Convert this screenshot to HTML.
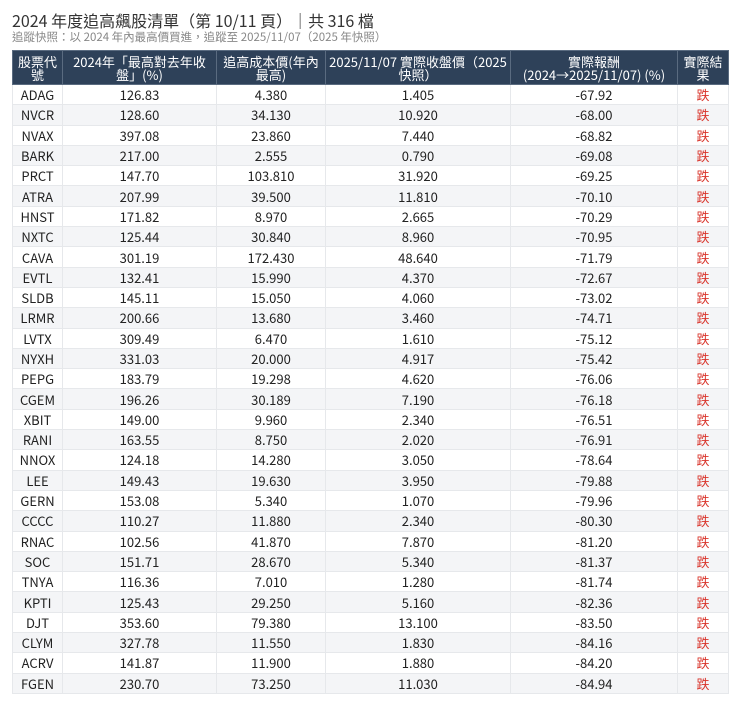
<!DOCTYPE html>
<html><head><meta charset="utf-8"><style>
body{margin:0;background:#fff;font-family:"Liberation Sans","Noto Sans CJK TC",sans-serif;color:#222}
.t{position:absolute;left:12px;top:8px;font-size:16px;color:#333;font-family:"Noto Sans CJK TC",sans-serif;white-space:nowrap}
.s{position:absolute;left:12px;top:29px;font-size:11.5px;color:#888;font-family:"Noto Sans CJK TC",sans-serif;white-space:nowrap}
table{position:absolute;left:12px;top:50px;width:716px;border-collapse:collapse;table-layout:fixed;font-family:"Noto Sans CJK TC",sans-serif;font-size:13px}
th{background:#2e4159;color:#fff;font-weight:normal;font-size:13px;line-height:13px;height:33px;padding:0 3px;border:1px solid #5a6b80;text-align:center}
td{height:19.3px;padding:0;text-align:center;border:1px solid #e6e8eb;line-height:19px}
tr:nth-child(even) td{background:#f4f5f7}
td.r{color:#d9342b}
</style></head><body>
<div class="t">2024 年度追高飆股清單（第 10/11 頁）｜共 316 檔</div>
<div class="s">追蹤快照：以 2024 年內最高價買進，追蹤至 2025/11/07（2025 年快照）</div>
<table>
<colgroup><col style="width:50px"><col style="width:154px"><col style="width:109px"><col style="width:185px"><col style="width:167px"><col style="width:51px"></colgroup>
<thead><tr><th>股票代號</th><th>2024年「最高對去年收盤」(%)</th><th>追高成本價(年內最高)</th><th>2025/11/07 實際收盤價（2025快照）</th><th>實際報酬<br>(2024→2025/11/07) (%)</th><th>實際結果</th></tr></thead>
<tbody>
<tr><td>ADAG</td><td>126.83</td><td>4.380</td><td>1.405</td><td>-67.92</td><td class="r">跌</td></tr>
<tr><td>NVCR</td><td>128.60</td><td>34.130</td><td>10.920</td><td>-68.00</td><td class="r">跌</td></tr>
<tr><td>NVAX</td><td>397.08</td><td>23.860</td><td>7.440</td><td>-68.82</td><td class="r">跌</td></tr>
<tr><td>BARK</td><td>217.00</td><td>2.555</td><td>0.790</td><td>-69.08</td><td class="r">跌</td></tr>
<tr><td>PRCT</td><td>147.70</td><td>103.810</td><td>31.920</td><td>-69.25</td><td class="r">跌</td></tr>
<tr><td>ATRA</td><td>207.99</td><td>39.500</td><td>11.810</td><td>-70.10</td><td class="r">跌</td></tr>
<tr><td>HNST</td><td>171.82</td><td>8.970</td><td>2.665</td><td>-70.29</td><td class="r">跌</td></tr>
<tr><td>NXTC</td><td>125.44</td><td>30.840</td><td>8.960</td><td>-70.95</td><td class="r">跌</td></tr>
<tr><td>CAVA</td><td>301.19</td><td>172.430</td><td>48.640</td><td>-71.79</td><td class="r">跌</td></tr>
<tr><td>EVTL</td><td>132.41</td><td>15.990</td><td>4.370</td><td>-72.67</td><td class="r">跌</td></tr>
<tr><td>SLDB</td><td>145.11</td><td>15.050</td><td>4.060</td><td>-73.02</td><td class="r">跌</td></tr>
<tr><td>LRMR</td><td>200.66</td><td>13.680</td><td>3.460</td><td>-74.71</td><td class="r">跌</td></tr>
<tr><td>LVTX</td><td>309.49</td><td>6.470</td><td>1.610</td><td>-75.12</td><td class="r">跌</td></tr>
<tr><td>NYXH</td><td>331.03</td><td>20.000</td><td>4.917</td><td>-75.42</td><td class="r">跌</td></tr>
<tr><td>PEPG</td><td>183.79</td><td>19.298</td><td>4.620</td><td>-76.06</td><td class="r">跌</td></tr>
<tr><td>CGEM</td><td>196.26</td><td>30.189</td><td>7.190</td><td>-76.18</td><td class="r">跌</td></tr>
<tr><td>XBIT</td><td>149.00</td><td>9.960</td><td>2.340</td><td>-76.51</td><td class="r">跌</td></tr>
<tr><td>RANI</td><td>163.55</td><td>8.750</td><td>2.020</td><td>-76.91</td><td class="r">跌</td></tr>
<tr><td>NNOX</td><td>124.18</td><td>14.280</td><td>3.050</td><td>-78.64</td><td class="r">跌</td></tr>
<tr><td>LEE</td><td>149.43</td><td>19.630</td><td>3.950</td><td>-79.88</td><td class="r">跌</td></tr>
<tr><td>GERN</td><td>153.08</td><td>5.340</td><td>1.070</td><td>-79.96</td><td class="r">跌</td></tr>
<tr><td>CCCC</td><td>110.27</td><td>11.880</td><td>2.340</td><td>-80.30</td><td class="r">跌</td></tr>
<tr><td>RNAC</td><td>102.56</td><td>41.870</td><td>7.870</td><td>-81.20</td><td class="r">跌</td></tr>
<tr><td>SOC</td><td>151.71</td><td>28.670</td><td>5.340</td><td>-81.37</td><td class="r">跌</td></tr>
<tr><td>TNYA</td><td>116.36</td><td>7.010</td><td>1.280</td><td>-81.74</td><td class="r">跌</td></tr>
<tr><td>KPTI</td><td>125.43</td><td>29.250</td><td>5.160</td><td>-82.36</td><td class="r">跌</td></tr>
<tr><td>DJT</td><td>353.60</td><td>79.380</td><td>13.100</td><td>-83.50</td><td class="r">跌</td></tr>
<tr><td>CLYM</td><td>327.78</td><td>11.550</td><td>1.830</td><td>-84.16</td><td class="r">跌</td></tr>
<tr><td>ACRV</td><td>141.87</td><td>11.900</td><td>1.880</td><td>-84.20</td><td class="r">跌</td></tr>
<tr><td>FGEN</td><td>230.70</td><td>73.250</td><td>11.030</td><td>-84.94</td><td class="r">跌</td></tr>
</tbody></table>
</body></html>
